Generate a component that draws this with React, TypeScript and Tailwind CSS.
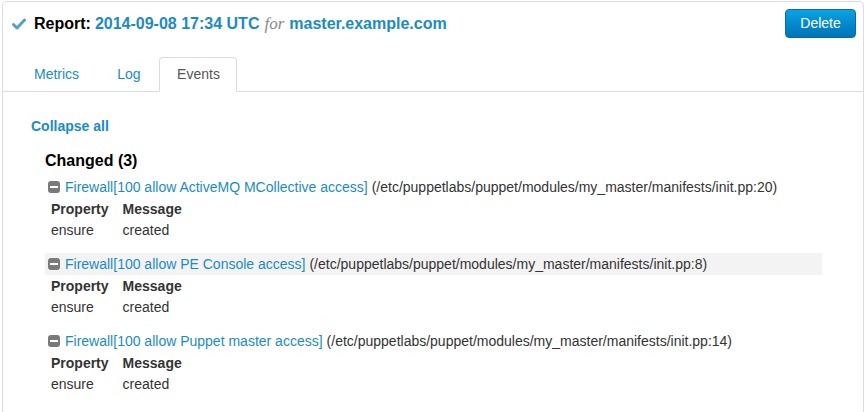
import React from "react";

const LINK = "text-[#1b8bc6]";

function Minus() {
  return (
    <span className="inline-flex w-[12px] h-[12px] rounded-[3px] bg-[#7a7a7a] items-center justify-center mr-[5px] shrink-0">
      <span className="block w-[8px] h-[2px] bg-white" />
    </span>
  );
}

function Event({ name, line, shaded }: { name: string; line: number; shaded?: boolean }) {
  return (
    <div className="mb-[12px]">
      <div className={`flex items-center h-[22px] pl-[3px] w-[777px] ${shaded ? "bg-[#f3f3f3]" : ""}`}>
        <Minus />
        <span className={LINK}>Firewall[{name}]</span>
        <span className="text-[#333] ml-[4px]">(/etc/puppetlabs/puppet/modules/my_master/manifests/init.pp:{line})</span>
      </div>
      <table className="ml-[6px] text-[#333]">
        <tbody>
          <tr className="h-[22px]">
            <th className="text-left font-bold pr-[14px]">Property</th>
            <th className="text-left font-bold">Message</th>
          </tr>
          <tr className="h-[18px]">
            <td>ensure</td>
            <td>created</td>
          </tr>
        </tbody>
      </table>
    </div>
  );
}

export default function App() {
  return (
    <div className="w-[866px] h-[412px] bg-white overflow-hidden" style={{ fontFamily: '"Liberation Sans", Arial, sans-serif' }}>
      <div className="ml-[2px] mt-[1px] w-[862px] h-[420px] border border-[#dcdcdc] border-b-0 rounded-t-[5px]">
        <div className="flex items-start justify-between pl-[9px] pr-[7px] pt-[7px]">
          <div className="flex items-center mt-[2px] text-[16px] font-bold">
            <svg width="14" height="12" viewBox="0 0 14 12" className="mr-[8px]">
              <path d="M1.5 6.5 L5 10 L12.5 2" stroke="#5a9fc9" strokeWidth="3" fill="none" strokeLinecap="round" strokeLinejoin="round" />
            </svg>
            <span className="text-black">Report:</span>
            <span className={`${LINK} ml-[4px]`}>2014-09-08 17:34 UTC</span>
            <span className="ml-[5px] italic font-normal text-[#888] text-[17px]" style={{ fontFamily: '"Liberation Serif", "Times New Roman", serif' }}>for</span>
            <span className={`${LINK} ml-[5px]`}>master.example.com</span>
          </div>
          <button className="w-[71px] h-[29px] rounded-[4px] text-white text-[14px] border border-[#0a6aa8] bg-gradient-to-b from-[#0aa3e6] to-[#0073b5]">
            Delete
          </button>
        </div>
        <div className="flex items-end mt-[19px] h-[35px] border-b border-[#dcdcdc] pl-[12px] text-[14px]">
          <div className={`${LINK} px-[19px] h-[34px] flex items-center`}>Metrics</div>
          <div className={`${LINK} px-[19px] h-[34px] flex items-center`}>Log</div>
          <div className="text-[#555] w-[78px] h-[35px] -mb-[1px] bg-white border border-[#dcdcdc] border-b-white rounded-t-[4px] flex items-center justify-center">Events</div>
        </div>
        <div className="pl-[28px] pt-[24px] text-[14px]">
          <div className={`${LINK} font-bold`}>Collapse all</div>
          <div className="pl-[14px] mt-[12px]">
            <div className="font-bold text-[16px] text-black mb-[3px]">Changed (3)</div>
            <Event name="100 allow ActiveMQ MCollective access" line={20} />
            <Event name="100 allow PE Console access" line={8} shaded />
            <Event name="100 allow Puppet master access" line={14} />
          </div>
        </div>
      </div>
    </div>
  );
}
